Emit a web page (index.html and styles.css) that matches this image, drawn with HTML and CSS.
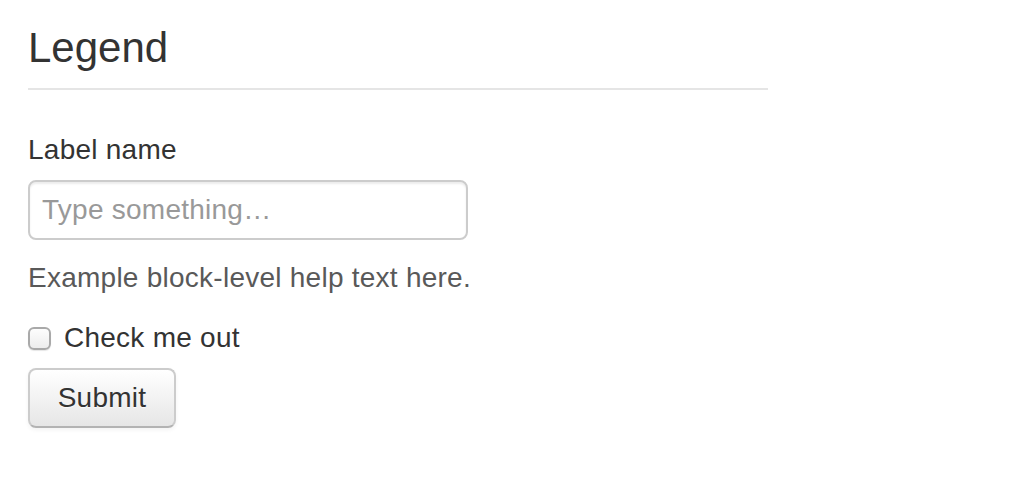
FILE: index.html
```html
<!DOCTYPE html>
<html>
<head>
<meta charset="utf-8">
<link rel="stylesheet" href="styles.css">
</head>
<body>
<form class="form">
  <fieldset class="fieldset">
    <legend class="legend">Legend</legend>
    <label class="label">Label name</label>
    <input class="input" type="text" placeholder="Type something…">
    <span class="help-block">Example block-level help text here.</span>
    <label class="checkbox"><input type="checkbox" class="check"> Check me out</label>
    <button type="submit" class="btn">Submit</button>
  </fieldset>
</form>
</body>
</html>
```
FILE: styles.css
```css
html, body {
  margin: 0;
  padding: 0;
  background: #fff;
}
body {
  padding: 8px 28px;
  font-family: "Helvetica Neue", Helvetica, "Liberation Sans", Arial, sans-serif;
  font-size: 28px;
  line-height: 40px;
  color: #333;
  letter-spacing: 0.25px;
}
.form {
  margin: 0 0 40px;
}
.fieldset {
  margin: 0;
  padding: 0;
  border: 0;
}
.legend {
  display: block;
  width: 740px;
  padding: 0;
  margin-bottom: 40px;
  font-size: 42px;
  line-height: 80px;
  letter-spacing: 0;
  color: #333;
  border: 0;
  border-bottom: 2px solid #e5e5e5;
}
.label {
  display: block;
  margin-bottom: 10px;
}
.input {
  display: block;
  box-sizing: border-box;
  width: 440px;
  height: 60px;
  padding: 8px 12px;
  margin: 0 0 18px;
  font-family: inherit;
  font-size: 28px;
  line-height: 40px;
  letter-spacing: 0.25px;
  color: #555;
  background: #fff;
  border: 2px solid #ccc;
  border-radius: 8px;
  box-shadow: inset 0 2px 2px rgba(0,0,0,0.075);
  outline: none;
}
.input::placeholder {
  color: #999;
}
.help-block {
  display: block;
  color: #595959;
  margin-bottom: 20px;
}
.checkbox {
  display: flex;
  align-items: center;
  gap: 13px;
  margin-bottom: 10px;
  min-height: 40px;
}
.check {
  appearance: none;
  -webkit-appearance: none;
  margin: 0;
  width: 23px;
  height: 23px;
  box-sizing: border-box;
  border: 2px solid #a9a9a9;
  border-radius: 6px;
  background: linear-gradient(#fdfdfd, #ededed);
  box-shadow: 0 1px 1px rgba(0,0,0,0.1);
}
.btn {
  display: block;
  box-sizing: border-box;
  width: 148px;
  height: 60px;
  padding: 8px 24px;
  margin: 0;
  font-family: inherit;
  font-size: 28px;
  line-height: 40px;
  letter-spacing: 0.25px;
  color: #333;
  text-align: center;
  text-shadow: 0 1px 1px rgba(255,255,255,0.75);
  background: linear-gradient(#ffffff, #e6e6e6);
  border: 2px solid #cccccc;
  border-bottom-color: #b3b3b3;
  border-radius: 8px;
  box-shadow: inset 0 2px 0 rgba(255,255,255,0.2), 0 2px 4px rgba(0,0,0,0.05);
}
```
